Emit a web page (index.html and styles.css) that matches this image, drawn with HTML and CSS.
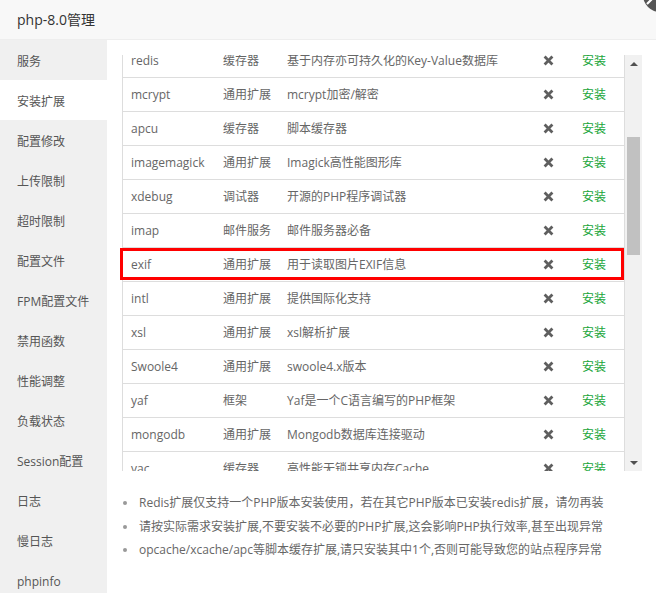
FILE: index.html
```html
<!DOCTYPE html>
<html lang="zh-CN">
<head>
<meta charset="utf-8">
<title>php-8.0管理</title>
<link rel="stylesheet" href="styles.css">
</head>
<body>
<div class="window">
  <div class="title">php-8.0管理</div>
  <div class="close-btn">
    <svg width="34" height="34" viewBox="0 0 34 34"><circle cx="17" cy="17" r="17" fill="#555"/><path d="M4 26 L30 0 M4 0 L30 26" stroke="#fff" stroke-width="2.2"/></svg>
  </div>
  <div class="main">
    <ul class="side">
      <li>服务</li>
      <li class="active">安装扩展</li>
      <li>配置修改</li>
      <li>上传限制</li>
      <li>超时限制</li>
      <li>配置文件</li>
      <li>FPM配置文件</li>
      <li>禁用函数</li>
      <li>性能调整</li>
      <li>负载状态</li>
      <li>Session配置</li>
      <li>日志</li>
      <li>慢日志</li>
      <li>phpinfo</li>
    </ul>
    <div class="content">
      <div class="table-row">
        <div class="tablebox">
          <div class="viewport">
            <table class="ext">
              <colgroup><col class="c1"><col class="c2"><col class="c3"><col class="c4"><col class="c5"></colgroup>
              <tbody>
                <tr><td>redis</td><td>缓存器</td><td>基于内存亦可持久化的Key-Value数据库</td><td class="x"><svg width="11" height="11" viewBox="0 0 11 11"><path d="M1.6 1.6 L9.4 9.4 M9.4 1.6 L1.6 9.4" stroke="#5f5f5f" stroke-width="2.8"/></svg></td><td class="ins">安装</td></tr>
                <tr><td>mcrypt</td><td>通用扩展</td><td>mcrypt加密/解密</td><td class="x"><svg width="11" height="11" viewBox="0 0 11 11"><path d="M1.6 1.6 L9.4 9.4 M9.4 1.6 L1.6 9.4" stroke="#5f5f5f" stroke-width="2.8"/></svg></td><td class="ins">安装</td></tr>
                <tr><td>apcu</td><td>缓存器</td><td>脚本缓存器</td><td class="x"><svg width="11" height="11" viewBox="0 0 11 11"><path d="M1.6 1.6 L9.4 9.4 M9.4 1.6 L1.6 9.4" stroke="#5f5f5f" stroke-width="2.8"/></svg></td><td class="ins">安装</td></tr>
                <tr><td>imagemagick</td><td>通用扩展</td><td>Imagick高性能图形库</td><td class="x"><svg width="11" height="11" viewBox="0 0 11 11"><path d="M1.6 1.6 L9.4 9.4 M9.4 1.6 L1.6 9.4" stroke="#5f5f5f" stroke-width="2.8"/></svg></td><td class="ins">安装</td></tr>
                <tr><td>xdebug</td><td>调试器</td><td>开源的PHP程序调试器</td><td class="x"><svg width="11" height="11" viewBox="0 0 11 11"><path d="M1.6 1.6 L9.4 9.4 M9.4 1.6 L1.6 9.4" stroke="#5f5f5f" stroke-width="2.8"/></svg></td><td class="ins">安装</td></tr>
                <tr><td>imap</td><td>邮件服务</td><td>邮件服务器必备</td><td class="x"><svg width="11" height="11" viewBox="0 0 11 11"><path d="M1.6 1.6 L9.4 9.4 M9.4 1.6 L1.6 9.4" stroke="#5f5f5f" stroke-width="2.8"/></svg></td><td class="ins">安装</td></tr>
                <tr><td>exif</td><td>通用扩展</td><td>用于读取图片EXIF信息</td><td class="x"><svg width="11" height="11" viewBox="0 0 11 11"><path d="M1.6 1.6 L9.4 9.4 M9.4 1.6 L1.6 9.4" stroke="#5f5f5f" stroke-width="2.8"/></svg></td><td class="ins">安装</td></tr>
                <tr><td>intl</td><td>通用扩展</td><td>提供国际化支持</td><td class="x"><svg width="11" height="11" viewBox="0 0 11 11"><path d="M1.6 1.6 L9.4 9.4 M9.4 1.6 L1.6 9.4" stroke="#5f5f5f" stroke-width="2.8"/></svg></td><td class="ins">安装</td></tr>
                <tr><td>xsl</td><td>通用扩展</td><td>xsl解析扩展</td><td class="x"><svg width="11" height="11" viewBox="0 0 11 11"><path d="M1.6 1.6 L9.4 9.4 M9.4 1.6 L1.6 9.4" stroke="#5f5f5f" stroke-width="2.8"/></svg></td><td class="ins">安装</td></tr>
                <tr><td>Swoole4</td><td>通用扩展</td><td>swoole4.x版本</td><td class="x"><svg width="11" height="11" viewBox="0 0 11 11"><path d="M1.6 1.6 L9.4 9.4 M9.4 1.6 L1.6 9.4" stroke="#5f5f5f" stroke-width="2.8"/></svg></td><td class="ins">安装</td></tr>
                <tr><td>yaf</td><td>框架</td><td>Yaf是一个C语言编写的PHP框架</td><td class="x"><svg width="11" height="11" viewBox="0 0 11 11"><path d="M1.6 1.6 L9.4 9.4 M9.4 1.6 L1.6 9.4" stroke="#5f5f5f" stroke-width="2.8"/></svg></td><td class="ins">安装</td></tr>
                <tr><td>mongodb</td><td>通用扩展</td><td>Mongodb数据库连接驱动</td><td class="x"><svg width="11" height="11" viewBox="0 0 11 11"><path d="M1.6 1.6 L9.4 9.4 M9.4 1.6 L1.6 9.4" stroke="#5f5f5f" stroke-width="2.8"/></svg></td><td class="ins">安装</td></tr>
                <tr><td>vac</td><td>缓存器</td><td>高性能无锁共享内存Cache</td><td class="x"><svg width="11" height="11" viewBox="0 0 11 11"><path d="M1.6 1.6 L9.4 9.4 M9.4 1.6 L1.6 9.4" stroke="#5f5f5f" stroke-width="2.8"/></svg></td><td class="ins">安装</td></tr>
              </tbody>
            </table>
          </div>
          <div class="highlight"></div>
        </div>
        <div class="scrollbar">
          <div class="sb-btn"><span class="arrow-up"></span></div>
          <div class="sb-track"><div class="sb-thumb"></div></div>
          <div class="sb-btn"><span class="arrow-down"></span></div>
        </div>
      </div>
      <ul class="notes">
        <li>Redis扩展仅支持一个PHP版本安装使用，若在其它PHP版本已安装redis扩展，请勿再装</li>
        <li>请按实际需求安装扩展,不要安装不必要的PHP扩展,这会影响PHP执行效率,甚至出现异常</li>
        <li>opcache/xcache/apc等脚本缓存扩展,请只安装其中1个,否则可能导致您的站点程序异常</li>
      </ul>
    </div>
  </div>
</div>
</body>
</html>
```

FILE: styles.css
```css
* { box-sizing: border-box; }
html, body {
  margin: 0;
  padding: 0;
  width: 656px;
  height: 593px;
  overflow: hidden;
  background: #fff;
  font-family: "Open Sans", "Noto Sans CJK SC", sans-serif;
}
.window {
  position: relative;
  width: 656px;
  height: 593px;
  overflow: hidden;
}
.title {
  height: 40px;
  line-height: 39px;
  padding-left: 17px;
  font-size: 14px;
  color: #333;
  background: #f8f8f8;
  border-bottom: 1px solid #eee;
}
.close-btn {
  position: absolute;
  left: 643px;
  top: -22px;
  width: 34px;
  height: 34px;
}
.close-btn svg { display: block; }
.main {
  display: flex;
  height: 553px;
}
.side {
  list-style: none;
  margin: 0;
  padding: 0;
  width: 107px;
  flex: none;
  background: #f0f0f0;
}
.side li {
  height: 40px;
  line-height: 37px;
  padding: 3px 0 0 17px;
  font-size: 12px;
  color: #555;
  white-space: nowrap;
}
.side li.active { background: #fff; }
.content {
  flex: 1;
  padding: 15px 14px 0 15px;
  display: flex;
  flex-direction: column;
}
.table-row {
  display: flex;
  height: 416px;
}
.tablebox {
  position: relative;
  width: 503px;
  border-left: 1px solid #ddd;
  border-right: 1px solid #ddd;
}
.viewport {
  height: 416px;
  overflow: hidden;
}
.ext {
  width: 501px;
  table-layout: fixed;
  border-collapse: separate;
  border-spacing: 0;
  margin-top: -11px;
  font-size: 12px;
  color: #666;
}
.ext col.c1 { width: 91px; }
.ext col.c2 { width: 64px; }
.ext col.c3 { width: 252px; }
.ext col.c4 { width: 36px; }
.ext col.c5 { width: 58px; }
.ext td {
  padding: 0 0 0 9px;
  line-height: 33px;
  border-bottom: 1px solid #ddd;
  white-space: nowrap;
  overflow: hidden;
}
.ext td:first-child { padding-left: 8px; }
.ext td.x { padding: 0; text-align: center; }
.ext td.x svg { vertical-align: middle; margin-top: -2px; }
.ext td.ins { padding: 0 2px 0 0; text-align: center; color: #20a53a; }
.highlight {
  position: absolute;
  left: -3px;
  top: 193px;
  width: 504px;
  height: 32px;
  border: 3px solid #f00;
}
.scrollbar {
  width: 17px;
  flex: none;
  background: #f1f1f1;
  display: flex;
  flex-direction: column;
}
.sb-btn {
  height: 17px;
  display: flex;
  align-items: center;
  justify-content: center;
}
.arrow-up, .arrow-down {
  width: 0;
  height: 0;
  border-left: 4px solid transparent;
  border-right: 4px solid transparent;
}
.arrow-up { border-bottom: 4px solid #505050; }
.arrow-down { border-top: 4px solid #505050; }
.sb-track { flex: 1; }
.sb-thumb {
  margin: 65px 2px 0 2px;
  height: 118px;
  background: #c1c1c1;
}
.notes {
  list-style: none;
  margin: 20px 0 0 0;
  padding: 0;
  font-size: 12px;
  color: #666;
}
.notes li {
  position: relative;
  padding-left: 17px;
  line-height: 23.5px;
  white-space: nowrap;
}
.notes li::before {
  content: "";
  position: absolute;
  left: 1px;
  top: 10px;
  width: 4px;
  height: 4px;
  border-radius: 50%;
  background: #999;
}
```
